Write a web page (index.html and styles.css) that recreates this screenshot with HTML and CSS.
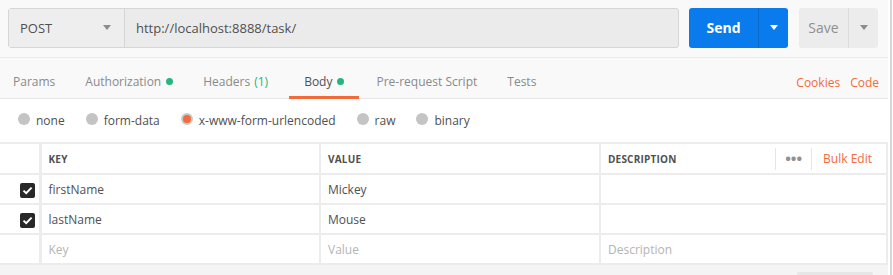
FILE: index.html
```html
<!DOCTYPE html>
<html>
<head>
    <title>Request Builder</title>
    <link rel="stylesheet" href="styles.css">
</head>
<body>
    <div class="app">
        <!-- request url bar -->
        <div class="request-bar">
            <div class="url-group">
                <div class="method">
                    <span>POST</span>
                    <span class="caret"></span>
                </div>
                <div class="url">http://localhost:8888/task/</div>
            </div>
            <div class="send-btn">
                <span class="send-label">Send</span>
                <span class="send-drop"><span class="caret white"></span></span>
            </div>
            <div class="save-btn">
                <span class="save-label">Save</span>
                <span class="save-drop"><span class="caret"></span></span>
            </div>
        </div>

        <!-- tabs -->
        <div class="tabs">
            <div class="tab">Params</div>
            <div class="tab">Authorization <span class="dot"></span></div>
            <div class="tab headers">Headers <span class="count">(1)</span></div>
            <div class="tab active">Body <span class="dot"></span></div>
            <div class="tab">Pre-request Script</div>
            <div class="tab">Tests</div>
            <div class="tab-links">
                <a href="#cookies">Cookies</a>
                <a href="#code">Code</a>
            </div>
        </div>

        <!-- body modes -->
        <div class="modes">
            <label class="mode"><span class="radio"></span>none</label>
            <label class="mode"><span class="radio"></span>form-data</label>
            <label class="mode"><span class="radio checked"></span>x-www-form-urlencoded</label>
            <label class="mode"><span class="radio"></span>raw</label>
            <label class="mode"><span class="radio"></span>binary</label>
        </div>

        <table class="params">
            <colgroup>
                <col class="c-check">
                <col class="c-key">
                <col class="c-value">
                <col>
            </colgroup>
            <thead>
                <tr>
                    <th></th>
                    <th>KEY</th>
                    <th>VALUE</th>
                    <th>
                        <div class="desc-head">
                            <span>DESCRIPTION</span>
                            <span class="head-tools">
                                <span class="more">&bull;&bull;&bull;</span>
                                <a href="#bulk">Bulk Edit</a>
                            </span>
                        </div>
                    </th>
                </tr>
            </thead>
            <tbody>
                <tr>
                    <td class="check-cell"><span class="checkbox"><svg width="11" height="9" viewBox="0 0 11 9"><path d="M1.5 4.6 L4.2 7.2 L9.6 1.6" fill="none" stroke="#fff" stroke-width="2"/></svg></span></td>
                    <td>firstName</td>
                    <td>Mickey</td>
                    <td></td>
                </tr>
                <tr>
                    <td class="check-cell"><span class="checkbox"><svg width="11" height="9" viewBox="0 0 11 9"><path d="M1.5 4.6 L4.2 7.2 L9.6 1.6" fill="none" stroke="#fff" stroke-width="2"/></svg></span></td>
                    <td>lastName</td>
                    <td>Mouse</td>
                    <td></td>
                </tr>
                <tr>
                    <td class="check-cell"></td>
                    <td class="placeholder">Key</td>
                    <td class="placeholder">Value</td>
                    <td class="placeholder">Description</td>
                </tr>
            </tbody>
        </table>

        <div class="footer">
            <span class="footer-btn"></span>
        </div>
    </div>
</body>
</html>
```

FILE: styles.css
```css
body {
    margin: 0;
    padding: 0;
    background-color: #fff;
    font-family: 'Open Sans', 'Noto Sans', sans-serif;
    font-size: 12px;
    color: #505050;
}

.app {
    width: 888px;
    height: 275px;
    overflow: hidden;
    border-right: 2px solid #fff;
    box-shadow: 2px 0 0 #d6d6d6;
}

/* request bar */
.request-bar {
    display: flex;
    align-items: center;
    height: 58px;
    padding-left: 8px;
    box-sizing: border-box;
    background-color: #f9f9f9;
    border-bottom: 1px solid #ececec;
}

.url-group {
    display: flex;
    width: 671px;
    height: 40px;
    box-sizing: border-box;
    border: 1px solid #d6d6d6;
    border-radius: 3px;
    background-color: #ebebeb;
    margin-top: -2px;
}

.method {
    display: flex;
    align-items: center;
    justify-content: space-between;
    width: 116px;
    padding: 0 13px 0 11px;
    box-sizing: border-box;
    border-right: 1px solid #d6d6d6;
    background-color: #eeeeee;
    font-size: 13px;
    color: #505050;
}

.url {
    display: flex;
    align-items: center;
    padding-left: 11px;
    font-size: 13px;
    color: #505050;
}

.caret {
    display: inline-block;
    width: 0;
    height: 0;
    border-left: 4px solid transparent;
    border-right: 4px solid transparent;
    border-top: 5px solid #8c8c8c;
}

.caret.white {
    border-top-color: #fff;
}

.send-btn {
    display: flex;
    width: 99px;
    height: 40px;
    margin-left: 10px;
    margin-top: -2px;
    border-radius: 3px;
    background-color: #097bed;
    color: #fff;
}

.send-label {
    width: 69px;
    display: flex;
    align-items: center;
    justify-content: center;
    font-size: 14px;
    font-weight: bold;
    border-right: 1px solid #0a6ad0;
}

.send-drop {
    flex: 1;
    display: flex;
    align-items: center;
    justify-content: center;
}

.save-btn {
    display: flex;
    width: 79px;
    height: 40px;
    margin-left: 11px;
    margin-top: -2px;
    border-radius: 3px;
    background-color: #ececec;
    color: #8f8f8f;
}

.save-label {
    width: 49px;
    display: flex;
    align-items: center;
    justify-content: center;
    font-size: 14px;
    border-right: 1px solid #dcdcdc;
}

.save-drop {
    flex: 1;
    display: flex;
    align-items: center;
    justify-content: center;
}

/* tabs */
.tabs {
    display: flex;
    height: 41px;
    box-sizing: border-box;
    background-color: #f9f9f9;
    border-bottom: 1px solid #e6e6e6;
}

.tab {
    display: flex;
    align-items: center;
    padding: 9px 15px 0;
    color: #8a8a8a;
    font-size: 12px;
    border-bottom: 3px solid transparent;
    margin-bottom: -1px;
}

.tab:first-child {
    padding-left: 13px;
}

.tab.headers {
    margin-right: 6px;
}

.tab.active {
    color: #505050;
    border-bottom-color: #f26b3a;
    margin-right: 2px;
}

.dot {
    display: inline-block;
    width: 7px;
    height: 7px;
    margin-left: 5px;
    border-radius: 50%;
    background-color: #26b47f;
}

.count {
    color: #26b47f;
    margin-left: 4px;
}

.tab-links {
    margin-left: auto;
    display: flex;
    align-items: center;
    padding-top: 9px;
    padding-right: 9px;
}

.tab-links a {
    color: #f26b3a;
    text-decoration: none;
    font-size: 12px;
    margin-left: 10px;
}

/* body modes */
.modes {
    display: flex;
    align-items: center;
    height: 43px;
    padding-left: 18px;
}

.mode {
    display: flex;
    align-items: center;
    margin-right: 21px;
    font-size: 12px;
    color: #505050;
}

.radio {
    display: inline-block;
    width: 12px;
    height: 12px;
    margin-right: 6px;
    margin-top: -4px;
    border-radius: 50%;
    background-color: #c4c4c4;
    box-sizing: border-box;
}

.radio.checked {
    background-color: #f26b3a;
    border: 2px solid #c9c9c9;
}

/* params table */
.params {
    width: 888px;
    border-collapse: collapse;
    table-layout: fixed;
    border-top: 2px solid #ececec;
}

.c-check {
    width: 40px;
}

.c-key {
    width: 280px;
}

.c-value {
    width: 280px;
}

.params th,
.params td {
    border: 2px solid #ececec;
    padding: 0 7px;
    text-align: left;
    height: 28px;
}

.params th {
    height: 29px;
    font-size: 10px;
    font-weight: bold;
    color: #505050;
    letter-spacing: 0.2px;
}

.params th:first-child,
.params td:first-child {
    border-left: none;
    border-right: 3px solid #ececec;
}

.params td {
    font-size: 12px;
    color: #505050;
}

.params td.placeholder {
    color: #b4b4b4;
}

.check-cell {
    text-align: right !important;
    padding-right: 4px !important;
}

.checkbox {
    display: inline-flex;
    align-items: center;
    justify-content: center;
    width: 15px;
    height: 15px;
    border-radius: 2px;
    background-color: #282828;
    vertical-align: middle;
}

.desc-head {
    display: flex;
    align-items: center;
    justify-content: space-between;
}

.head-tools {
    display: flex;
    align-items: center;
    height: 22px;
}

.more {
    color: #909090;
    font-size: 15px;
    letter-spacing: 0;
    padding: 0 9px;
    height: 22px;
    line-height: 20px;
    border-left: 1px solid #e6e6e6;
    border-right: 1px solid #e6e6e6;
}

.head-tools a {
    color: #f26b3a;
    text-decoration: none;
    font-weight: normal;
    font-size: 12px;
    margin-left: 11px;
    margin-right: 7px;
    letter-spacing: 0;
}

.footer {
    display: flex;
    justify-content: flex-end;
    align-items: flex-end;
    height: 12px;
    background-color: #f4f4f4;
    padding-right: 15px;
}

.footer-btn {
    width: 76px;
    height: 5px;
    background-color: #e6e6e6;
    border-radius: 2px 2px 0 0;
}
```
